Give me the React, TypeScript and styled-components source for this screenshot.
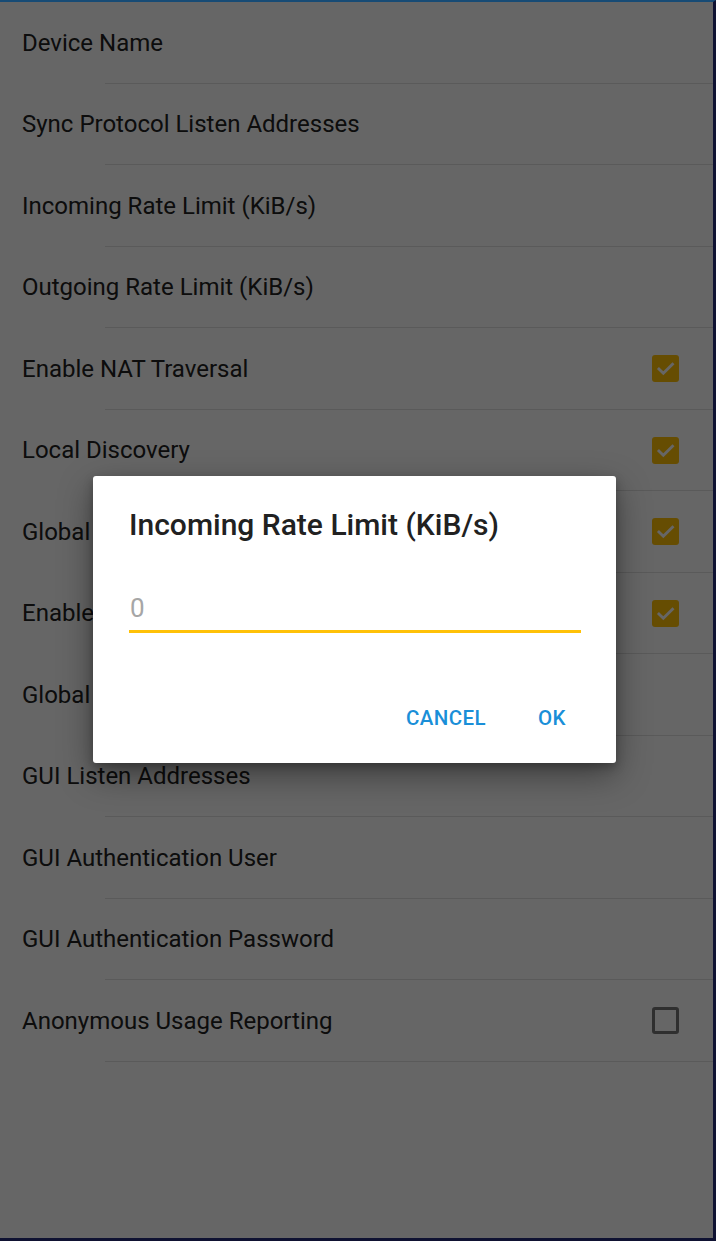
import React from "react";
import styled, { createGlobalStyle } from "styled-components";

const GlobalStyle = createGlobalStyle`
  html, body {
    margin: 0;
    padding: 0;
    background: #0f1232;
  }
  * { box-sizing: border-box; }
`;

const Screen = styled.div`
  position: relative;
  width: 716px;
  height: 1241px;
  overflow: hidden;
  background: #ffffff;
  border-top: 2px solid #174b75;
  border-right: 3px solid #0f1232;
  border-bottom: 3px solid #0f1232;
  font-family: Roboto, "Noto Sans", Arial, sans-serif;
`;

const List = styled.div`
  display: flex;
  flex-direction: column;
`;

const Row = styled.div`
  display: flex;
  align-items: center;
  justify-content: space-between;
  height: 80.5px;
  padding: 1px 34px 0 22px;
`;

const Label = styled.span`
  font-size: 24px;
  color: #212121;
  white-space: nowrap;
`;

const Divider = styled.div`
  height: 1px;
  margin-left: 105px;
  background: #e0e0e0;
`;

const Box = styled.div<{ $checked: boolean }>`
  width: 27px;
  height: 27px;
  border-radius: 3px;
  display: flex;
  align-items: center;
  justify-content: center;
  background: ${(p) => (p.$checked ? "#ffc107" : "transparent")};
  border: ${(p) => (p.$checked ? "none" : "3px solid #757575")};
`;

const Scrim = styled.div`
  position: absolute;
  inset: 0;
  background: rgba(0, 0, 0, 0.6);
`;

const Dialog = styled.div`
  position: absolute;
  left: 93px;
  top: 474px;
  width: 523px;
  height: 287px;
  background: #ffffff;
  border-radius: 3px;
  box-shadow: 0 12px 34px rgba(0, 0, 0, 0.4), 0 4px 10px rgba(0, 0, 0, 0.25);
  display: flex;
  flex-direction: column;
`;

const Title = styled.h2`
  margin: 0;
  padding: 32px 36px 0;
  font-size: 30px;
  line-height: 34px;
  font-weight: 500;
  color: #212121;
  white-space: nowrap;
`;

const Field = styled.div`
  margin: 46px 35px 0 36px;
  height: 45px;
  display: flex;
  align-items: center;
  border-bottom: 3px solid #ffc107;
`;

const Hint = styled.span`
  font-size: 26px;
  color: #a6a6a6;
  padding-left: 1px;
  padding-bottom: 2px;
`;

const Actions = styled.div`
  margin-top: auto;
  display: flex;
  justify-content: flex-end;
  gap: 6px;
  padding: 0 16px 18px;
`;

const ActionButton = styled.button`
  min-width: 96px;
  height: 54px;
  padding: 0 12px;
  border: none;
  background: transparent;
  font-family: Roboto, "Noto Sans", Arial, sans-serif;
  font-size: 20.5px;
  font-weight: 500;
  letter-spacing: 0.4px;
  color: #1a8fd8;
  text-transform: uppercase;
`;

const Check = () => (
  <svg width="21" height="21" viewBox="0 0 24 24">
    <path d="M4.5 12.5l5 5L20 7" fill="none" stroke="#ffffff" strokeWidth="3.2" strokeLinecap="square" />
  </svg>
);

type Item = { label: string; check?: boolean };

const items: Item[] = [
  { label: "Device Name" },
  { label: "Sync Protocol Listen Addresses" },
  { label: "Incoming Rate Limit (KiB/s)" },
  { label: "Outgoing Rate Limit (KiB/s)" },
  { label: "Enable NAT Traversal", check: true },
  { label: "Local Discovery", check: true },
  { label: "Global Discovery", check: true },
  { label: "Enable Relaying", check: true },
  { label: "Global Announce Servers" },
  { label: "GUI Listen Addresses" },
  { label: "GUI Authentication User" },
  { label: "GUI Authentication Password" },
  { label: "Anonymous Usage Reporting", check: false },
];

export default function App() {
  return (
    <>
      <GlobalStyle />
      <Screen>
        <List>
          {items.map((it) => (
            <React.Fragment key={it.label}>
              <Row>
                <Label>{it.label}</Label>
                {it.check !== undefined && (
                  <Box $checked={it.check}>{it.check && <Check />}</Box>
                )}
              </Row>
              <Divider />
            </React.Fragment>
          ))}
        </List>
        <Scrim />
        <Dialog>
          <Title>Incoming Rate Limit (KiB/s)</Title>
          <Field>
            <Hint>0</Hint>
          </Field>
          <Actions>
            <ActionButton>Cancel</ActionButton>
            <ActionButton>OK</ActionButton>
          </Actions>
        </Dialog>
      </Screen>
    </>
  );
}
